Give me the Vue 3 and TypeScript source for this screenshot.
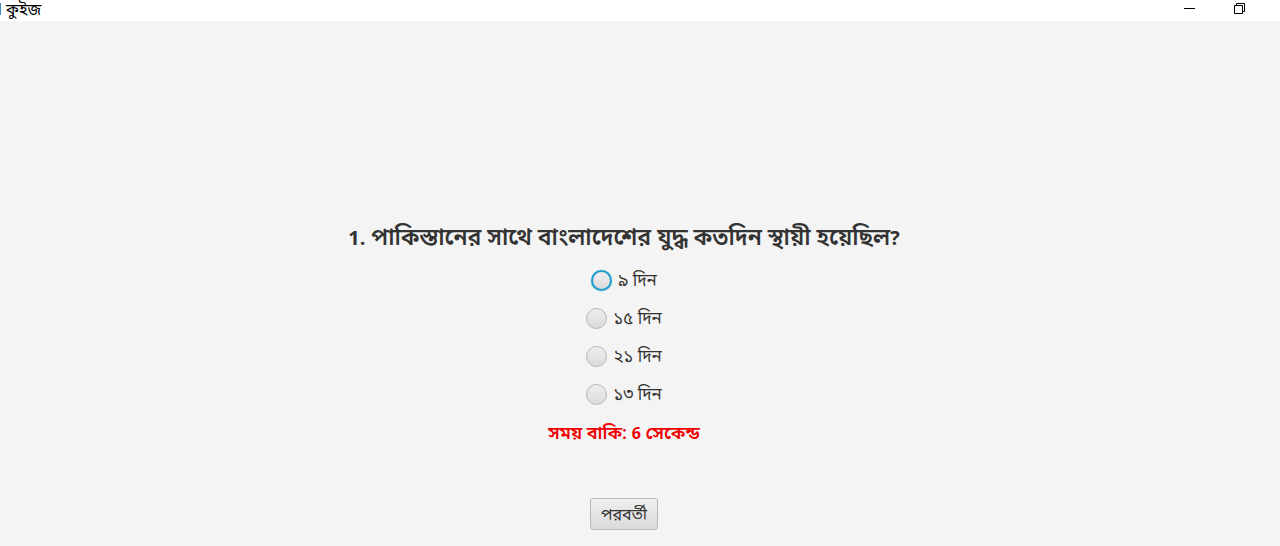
<script setup lang="ts">
import { ref } from 'vue'
const options: string[] = ['৯ দিন', '১৫ দিন', '২১ দিন', '১৩ দিন']
const picked = ref<string>('')
</script>

<template>
  <div class="window">
    <header class="titlebar">
      <div class="title"><span class="app-mark"></span>কুইজ</div>
      <div class="controls">
        <button type="button" aria-label="Minimize"><svg width="12" height="12" viewBox="0 0 12 12"><path d="M0 6.5H11" /></svg></button>
        <button type="button" aria-label="Restore"><svg width="12" height="12" viewBox="0 0 12 12"><path d="M.5 3.5H8.5V11.5H.5ZM2.5 3.5V1.5H10.5V9.5H8.5" /></svg></button>
      </div>
    </header>
    <main class="quiz">
      <h1><span class="latin">1.</span> পাকিস্তানের সাথে বাংলাদেশের যুদ্ধ কতদিন স্থায়ী হয়েছিল<span class="latin">?</span></h1>
      <label v-for="o in options" :key="o" class="option">
        <input v-model="picked" type="radio" name="answer" :value="o" :class="{ active: o === options[0] }" />
        <span>{{ o }}</span>
      </label>
      <p class="timer">সময় বাকি: <span class="count">6</span> সেকেন্ড</p>
      <button class="next" type="button">পরবর্তী</button>
    </main>
  </div>
</template>

<style>
body { background: #f4f4f4; }
</style>

<style scoped>
.window { min-height: 100vh; display: flex; flex-direction: column; font-family: "Open Sans", "Noto Sans Bengali", sans-serif; color: #333; background: #f4f4f4; }
.titlebar { height: 21px; display: flex; justify-content: space-between; background: #fff; color: #000; }
.title { display: flex; align-items: center; gap: 5px; height: 18px; font-size: 16px; line-height: 18px; }
.app-mark { width: 1px; height: 12px; background: #3b88bd; }
.controls { display: flex; height: 16px; padding-right: 15px; }
.controls button { width: 50px; padding: 0; border: 0; background: none; display: flex; align-items: center; justify-content: center; }
svg { fill: none; stroke: #000; stroke-width: 1; }
.quiz { display: flex; flex-direction: column; align-items: center; padding: 198px 32px 16px 0; }
h1 { margin: 0 0 13px; font-size: 23px; line-height: 34px; font-weight: 600; }
.latin { font-size: 20px; line-height: 1; font-weight: 700; }
.option { display: flex; align-items: center; gap: 6px; height: 28px; margin-bottom: 10px; font-size: 17px; line-height: 28px; }
.option input { appearance: none; box-sizing: border-box; width: 21px; height: 21px; margin: 0; border: 1px solid #b5b5b5; border-radius: 50%; background: linear-gradient(#efefef, #dadada); }
.option input.active { border: 2px solid #219fcc; box-shadow: 0 0 1px #219fcc; }
.option input:checked { background: radial-gradient(circle, #333 30%, #e4e4e4 34%); }
.timer { margin: 0; font-size: 18px; line-height: 28px; font-weight: 600; color: #f00000; }
.count { font-size: 16px; line-height: 1; font-weight: 700; }
.next { height: 32px; margin-top: 52px; padding: 0 10px; border: 1px solid #bababa; border-radius: 3px; background: linear-gradient(#efefef, #dadada); color: #333; font: inherit; font-size: 16px; line-height: 28px; }
</style>
